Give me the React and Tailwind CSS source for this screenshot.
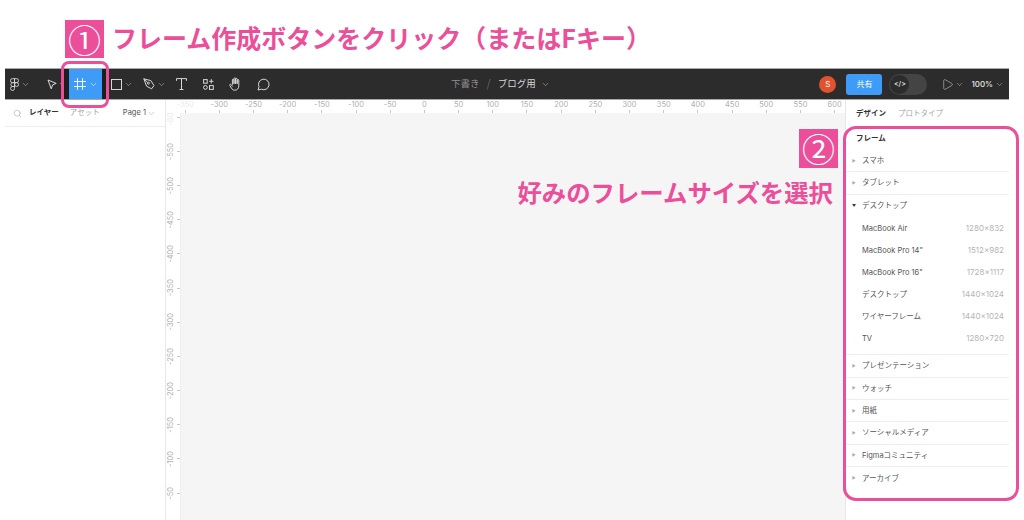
import React from 'react';
import { ChevronDown, Search, Play } from 'lucide-react';

const FONT = "font-['Inter','Noto_Sans_CJK_JP',sans-serif]";
const CJK = "font-['Noto_Sans_CJK_JP',sans-serif]";

const hRuler = [];
for (let v = -350; v <= 600; v += 50) hRuler.push(v);

const vRuler = [];
for (let v = -600; v <= -50; v += 50) vRuler.push(v);

const desktopSizes = [
  { name: 'MacBook Air', size: '1280×832' },
  { name: 'MacBook Pro 14"', size: '1512×982' },
  { name: 'MacBook Pro 16"', size: '1728×1117' },
  { name: 'デスクトップ', size: '1440×1024' },
  { name: 'ワイヤーフレーム', size: '1440×1024' },
  { name: 'TV', size: '1280×720' },
];

const lowerGroups = ['プレゼンテーション', 'ウォッチ', '用紙', 'ソーシャルメディア', 'Figmaコミュニティ', 'アーカイブ'];

function Chevron({ className = 'text-[#b8b8b8]' }) {
  return <ChevronDown size={9} strokeWidth={1.5} className={`shrink-0 ${className}`} />;
}

function FigmaLogo() {
  return (
    <svg width="9" height="13" viewBox="0 0 10 14" fill="none" stroke="#d8d8d8" strokeWidth="1" className="shrink-0">
      <path d="M5 .5H2.7a2.2 2.2 0 0 0 0 4.4H5zM5 .5h2.3a2.2 2.2 0 0 1 0 4.4H5zM5 4.9H2.7a2.2 2.2 0 0 0 0 4.3H5zM5 9.2H2.7a2.2 2.2 0 1 0 2.3 2.2z" />
      <circle cx="7.3" cy="7" r="2.2" />
    </svg>
  );
}

function CursorIcon() {
  return (
    <svg width="10" height="11" viewBox="0 0 10 11" fill="none" stroke="#d8d8d8" strokeWidth="1" className="shrink-0">
      <path d="M1 1 9.2 4.4 5.6 5.9 4.2 9.8z" strokeLinejoin="round" />
    </svg>
  );
}

function FrameIcon() {
  return (
    <svg width="12" height="12" viewBox="0 0 12 12" fill="none" stroke="#f2f7ff" strokeWidth="1">
      <path d="M3.5 0v12M8.5 0v12M0 3.5h12M0 8.5h12" />
    </svg>
  );
}

function PenIcon() {
  return (
    <svg width="12" height="12" viewBox="0 0 12 12" fill="none" stroke="#d8d8d8" strokeWidth="1">
      <path d="M.8.8 7.8 2.6 11 7.6 8.6 10.8 3.6 8.2z" strokeLinejoin="round" />
      <circle cx="5.4" cy="5.2" r="1" />
      <path d="M.8.8 4.6 4.4" />
    </svg>
  );
}

function TextIcon() {
  return (
    <svg width="11" height="12" viewBox="0 0 11 12" fill="none" stroke="#d8d8d8" strokeWidth="1">
      <path d="M.5 2.8V.6h10v2.2M5.5.6v10.9M3.6 11.5h3.8" />
    </svg>
  );
}

function ResourcesIcon() {
  return (
    <svg width="11" height="11" viewBox="0 0 11 11" fill="none" stroke="#d8d8d8" strokeWidth="1">
      <rect x=".6" y=".6" width="3.6" height="3.6" />
      <path d="M8.3.2v4.2M6.2 2.3h4.2" />
      <circle cx="2.4" cy="8.4" r="1.9" />
      <rect x="6.5" y="6.6" width="3.8" height="3.8" />
    </svg>
  );
}

function HandIcon() {
  return (
    <svg width="13" height="14" viewBox="0 0 13 14" fill="none" stroke="#d8d8d8" strokeWidth="1" strokeLinecap="round" strokeLinejoin="round">
      <path d="M3.4 7.4V3a.8.8 0 0 1 1.6 0v3.6M5 6.4V1.7a.8.8 0 0 1 1.6 0v4.7M6.6 6.2V2.2a.8.8 0 0 1 1.6 0v4.2M8.2 6.4V3.4a.8.8 0 0 1 1.6 0v5.4c0 2.6-1.6 4.4-4 4.4-1.7 0-2.6-.8-3.4-2.2L.8 8.4c-.5-.9.7-1.6 1.3-.8l1.3 1.6" />
    </svg>
  );
}

function CommentIcon() {
  return (
    <svg width="13" height="13" viewBox="0 0 13 13" fill="none" stroke="#d8d8d8" strokeWidth="1">
      <path d="M1 12 2 8.8A5.3 5.3 0 1 1 4.4 11.2z" strokeLinejoin="round" />
    </svg>
  );
}

function Toolbar() {
  return (
    <header className="flex h-8 items-center border-y border-[#a8a8a8] bg-[#2c2c2c]">
      <div className="flex w-[42px] items-center gap-[2px] pl-[5px]">
        <FigmaLogo />
        <Chevron />
      </div>
      <div className="flex w-[17px] items-center gap-[1px] overflow-hidden">
        <CursorIcon />
        <Chevron />
      </div>
      <div className="h-full w-[5px] bg-[#1e1e1e]" />
      <div className="flex h-full w-[33px] items-center justify-center gap-[3px] bg-[#3f9bf8]">
        <FrameIcon />
        <ChevronDown size={9} strokeWidth={1.5} className="text-white" />
      </div>
      <div className="h-full w-[4px] bg-[#1e1e1e]" />
      <div className="ml-[5px] flex items-center gap-[2px]">
        <span className="block h-[11px] w-[11px] border border-[#d8d8d8]" />
        <Chevron />
      </div>
      <div className="ml-[10px] flex items-center gap-[2px]">
        <PenIcon />
        <Chevron />
      </div>
      <div className="ml-[10px] flex">
        <TextIcon />
      </div>
      <div className="ml-[16px] flex">
        <ResourcesIcon />
      </div>
      <div className="ml-[15px] flex">
        <HandIcon />
      </div>
      <div className="ml-[15px] flex">
        <CommentIcon />
      </div>
      <div className="ml-[181px] flex items-center text-[9.5px] text-[#8f8f8f]">
        <span>下書き</span>
        <span className="mx-[7px] text-[12px] font-light text-[#666]">/</span>
        <span className="text-[#d6d6d6]">ブログ用</span>
        <Chevron className="ml-[5px] text-[#b8b8b8]" />
      </div>
      <div className="ml-auto flex h-full items-center pr-[5px]">
        <div className="flex h-[17px] w-[17px] items-center justify-center rounded-full bg-[#e0532c] text-[8px] text-white">S</div>
        <div className="ml-[10px] flex h-[21px] w-[36px] items-center justify-center rounded-[3px] bg-[#3f9bf8] text-[8px] text-white">共有</div>
        <div className="ml-[7px] flex h-[21px] w-[38px] items-center rounded-full bg-[#444444] pl-[1px]">
          <div className="flex h-[19px] w-[19px] items-center justify-center rounded-full bg-[#2c2c2c] text-[7px] font-medium text-[#e6e6e6]">&lt;/&gt;</div>
        </div>
        <Play size={13} strokeWidth={1} className="ml-[14px] text-[#d8d8d8]" />
        <Chevron className="ml-[1px] text-[#b8b8b8]" />
        <span className="ml-[7px] text-[8px] font-medium text-[#e6e6e6]">100%</span>
        <Chevron className="ml-[2px] text-[#b8b8b8]" />
      </div>
    </header>
  );
}

function LeftPanel() {
  return (
    <aside className="w-[161px] shrink-0 border-r border-[#e8e8e8] bg-white">
      <div className="flex h-[27px] items-center border-b border-[#eeeeee] pl-[8px] pr-[9px] text-[7.5px]">
        <Search size={9} strokeWidth={1.5} className="text-[#a5a5a5]" />
        <span className="ml-[7px] font-bold text-[#333]">レイヤー</span>
        <span className="ml-[11px] text-[#a5a5a5]">アセット</span>
        <span className="ml-auto text-[#555]">Page 1</span>
        <Chevron className="ml-[1px] text-[#a5a5a5]" />
      </div>
    </aside>
  );
}

function TopRuler() {
  return (
    <div className="flex h-[13px] overflow-hidden bg-white pl-[2px]">
      {hRuler.map((v, i) => (
        <div key={v} className="flex h-full w-[34.2px] shrink-0 flex-col items-center justify-between">
          <span className={`text-[7.5px] leading-[10px] ${i === 0 ? 'text-[#ebebeb]' : 'text-[#b0b0b0]'}`}>{v}</span>
          <span className="block h-[3px] w-px bg-[#c8c8c8]" />
        </div>
      ))}
    </div>
  );
}

function SideRuler() {
  return (
    <div className="w-[15px] shrink-0 overflow-hidden border-r border-[#eeeeee] bg-white">
      <div className="mt-[-13px]">
        {vRuler.map((v, i) => (
          <div key={v} className="flex h-[34.2px] items-center justify-end">
            <span className={`rotate-180 text-[7.5px] leading-[10px] [writing-mode:vertical-rl] ${i === 0 ? 'text-[#ebebeb]' : 'text-[#b0b0b0]'}`}>{v}</span>
            <span className="ml-[1px] block h-px w-[3px] bg-[#c8c8c8]" />
          </div>
        ))}
      </div>
    </div>
  );
}

function GroupRow({ label, open, last }) {
  return (
    <div className={`flex h-[22.4px] items-center pl-[6px] text-[7.5px] text-[#555] ${last ? '' : 'border-b border-[#eeeeee]'}`}>
      <span className={`w-[10px] text-[4px] ${open ? 'text-[#333]' : 'text-[#aaa]'}`}>{open ? '▼' : '▶'}</span>
      <span>{label}</span>
    </div>
  );
}

function RightPanel() {
  return (
    <aside className="w-[164px] shrink-0 border-l border-[#e8e8e8] bg-white">
      <div className="flex h-[27px] items-center gap-[12px] pl-[10px] text-[7.5px]">
        <span className="font-bold text-[#333]">デザイン</span>
        <span className="text-[#a5a5a5]">プロトタイプ</span>
      </div>
      <div className="flex h-[23px] items-center pl-[10px] text-[7.5px] font-bold text-[#333]">フレーム</div>
      <GroupRow label="スマホ" />
      <GroupRow label="タブレット" />
      <GroupRow label="デスクトップ" open last />
      {desktopSizes.map((item) => (
        <div key={item.name} className="flex h-[22px] items-center justify-between pl-[16px] pr-[5px] text-[7.5px]">
          <span className="text-[#555]">{item.name}</span>
          <span className="text-[8px] text-[#b5b5b5]">{item.size}</span>
        </div>
      ))}
      <div className="mt-[5px] border-t border-[#eeeeee]">
        {lowerGroups.map((label, i) => (
          <GroupRow key={label} label={label} last={i === lowerGroups.length - 1} />
        ))}
      </div>
    </aside>
  );
}

export default function App() {
  return (
    <div className={`relative h-[520px] w-[1024px] overflow-hidden bg-white ${FONT}`}>
      <div className="flex h-[68px] items-start pl-[65px] pt-[20px]">
        <div className={`flex h-[38px] w-[39px] items-center justify-center bg-[#ec4f9a] text-[33px] leading-none text-white ${CJK}`}>①</div>
        <div className={`ml-[8px] mt-[-1px] text-[25px] font-semibold leading-[36px] text-[#ec4f9a] ${CJK}`}>フレーム作成ボタンをクリック（またはFキー）</div>
      </div>

      <div className="ml-[5px] mr-[15px] flex h-[452px] flex-col">
        <Toolbar />
        <div className="flex min-h-0 flex-1">
          <LeftPanel />
          <div className="flex min-w-0 flex-1 flex-col">
            <TopRuler />
            <div className="flex min-h-0 flex-1">
              <SideRuler />
              <main className="relative flex-1 bg-[#f5f5f5]">
                <div className={`absolute left-[618px] top-[16px] flex h-[39px] w-[39px] items-center justify-center bg-[#ec4f9a] text-[33px] leading-none text-white ${CJK}`}>②</div>
                <div className={`absolute right-[12px] top-[61px] whitespace-nowrap text-[24.4px] font-semibold leading-[36px] text-[#ec4f9a] ${CJK}`}>好みのフレームサイズを選択</div>
              </main>
            </div>
          </div>
          <RightPanel />
        </div>
      </div>

      {/* pink callouts */}
      <div className="pointer-events-none absolute left-[61px] top-[61px] h-[47px] w-[48px] rounded-[8px] border-[3px] border-[#ec4f9a]" />
      <div className="pointer-events-none absolute left-[843px] top-[126px] h-[375px] w-[176px] rounded-[13px] border-[3px] border-[#ec4f9a]" />
    </div>
  );
}
